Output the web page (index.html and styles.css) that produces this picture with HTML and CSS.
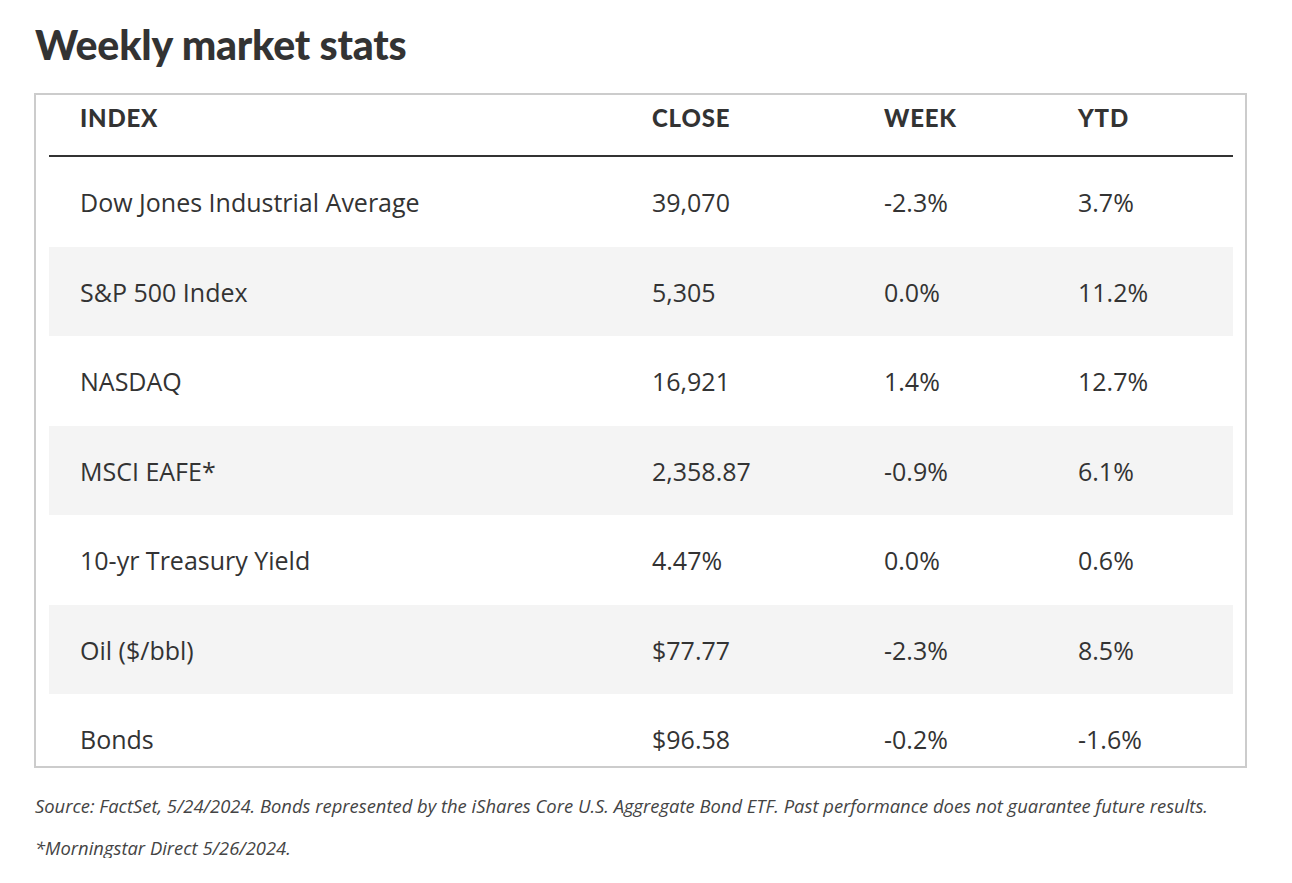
FILE: index.html
```html
<!DOCTYPE html>
<html lang="en">
<head>
<meta charset="utf-8">
<title>Weekly market stats</title>
<link rel="stylesheet" href="styles.css">
</head>
<body>
<main class="page">
  <h1 class="title">Weekly market stats</h1>
  <div class="table-box">
    <table class="stats">
      <colgroup>
        <col class="c-index"><col class="c-close"><col class="c-week"><col class="c-ytd">
      </colgroup>
      <thead>
        <tr><th>INDEX</th><th>CLOSE</th><th>WEEK</th><th>YTD</th></tr>
      </thead>
      <tbody>
        <tr><td>Dow Jones Industrial Average</td><td>39,070</td><td>-2.3%</td><td>3.7%</td></tr>
        <tr class="alt"><td>S&amp;P 500 Index</td><td>5,305</td><td>0.0%</td><td>11.2%</td></tr>
        <tr><td>NASDAQ</td><td>16,921</td><td>1.4%</td><td>12.7%</td></tr>
        <tr class="alt"><td>MSCI EAFE*</td><td>2,358.87</td><td>-0.9%</td><td>6.1%</td></tr>
        <tr><td>10-yr Treasury Yield</td><td>4.47%</td><td>0.0%</td><td>0.6%</td></tr>
        <tr class="alt"><td>Oil ($/bbl)</td><td>$77.77</td><td>-2.3%</td><td>8.5%</td></tr>
        <tr class="last"><td>Bonds</td><td>$96.58</td><td>-0.2%</td><td>-1.6%</td></tr>
      </tbody>
    </table>
  </div>
  <p class="note">Source: FactSet, 5/24/2024. Bonds represented by the iShares Core U.S. Aggregate Bond ETF. Past performance does not guarantee future results.</p>
  <p class="note">*Morningstar Direct 5/26/2024.</p>
</main>
</body>
</html>
```
FILE: styles.css
```css
html, body {
  margin: 0;
  padding: 0;
  background: #ffffff;
}
body {
  font-family: "Open Sans", Lato, Arial, sans-serif;
  color: #333333;
}
.page {
  padding: 18px 45px 0 34px;
}
.title {
  margin: 0 0 21px 1px;
  font-family: Lato, "Open Sans", Arial, sans-serif;
  font-size: 41px;
  line-height: 54px;
  font-weight: 900;
  color: #333333;
  letter-spacing: -0.2px;
}
.table-box {
  border: 2px solid #cccccc;
  padding: 0 12px 0 13px;
  width: 1184px;
}
.stats {
  width: 1184px;
  border-collapse: collapse;
  table-layout: fixed;
}
.c-index { width: 572px; }
.c-close { width: 232px; }
.c-week { width: 194px; }
.c-ytd { width: 186px; }
.stats th {
  text-align: left;
  font-family: Lato, "Open Sans", Arial, sans-serif;
  font-weight: 900;
  font-size: 24px;
  line-height: 29px;
  letter-spacing: 0.8px;
  padding: 8px 0 23px 31px;
  border-bottom: 2px solid #333333;
  color: #333333;
}
.stats td {
  font-size: 25px;
  line-height: 29px;
  padding: 31px 0 29.5px 31px;
  color: #333333;
}
.stats tr.alt td {
  background: #f4f4f4;
}
.stats tr.last td {
  padding-bottom: 12px;
}
.note {
  margin: 28px 0 0 1px;
  font-size: 18.4px;
  line-height: 20px;
  font-style: italic;
  color: #444444;
}
.note + .note {
  margin-top: 22px;
}
```
